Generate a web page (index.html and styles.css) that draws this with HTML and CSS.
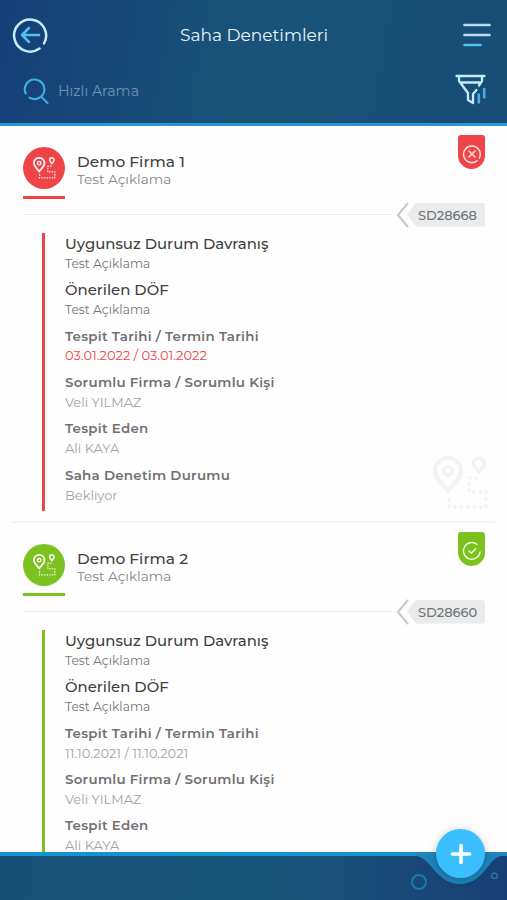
FILE: index.html
```html
<!DOCTYPE html>
<html lang="tr">
<head>
    <meta charset="UTF-8">
    <meta name="viewport" content="width=device-width, initial-scale=1.0">
    <title>Saha Denetimleri</title>
    <link rel="stylesheet" href="styles.css">
</head>
<body>
    <svg class="defs" width="0" height="0">
        <symbol id="route" viewBox="0 0 56 56">
            <g fill="none" stroke="currentColor">
                <path stroke-width="4.2" d="M15 35C10 28 2 23 2 15a13 13 0 0 1 26 0c0 8-8 13-13 20z"/>
                <circle cx="15" cy="15" r="4.2" stroke-width="3.4"/>
                <path stroke-width="3.600" d="M46 16c-3-4-5.500-5-5.500-8.500a5.500 5.500 0 0 1 11 0c0 3.500-2.500 4.500-5.500 8.500z"/>
                <path stroke-width="3" stroke-dasharray="3.500 3" d="M45 22h-9v14h17v15H16V41"/>
            </g>
        </symbol>
    </svg>

    <header>
        <div class="top-bar">
            <a href="#" class="back">
                <svg width="36" height="36" viewBox="0 0 36 36" fill="none" stroke-width="2.500" stroke-linecap="round" stroke-linejoin="round">
                    <path stroke="#c3ecff" d="M27.500 31.500A16 16 0 1 1 32 26.500"/>
                    <path stroke="#4fc0ef" d="M27 18H10M17 11l-7 7 7 7"/>
                </svg>
            </a>
            <h1>Saha Denetimleri</h1>
            <a href="#" class="menu">
                <svg width="28" height="24" viewBox="0 0 28 24" fill="none" stroke-width="2.700" stroke-linecap="round">
                    <path stroke="#b5dcf3" d="M1.500 2h25M1.500 12h25"/>
                    <path stroke="#4fc0ef" d="M1.500 22h16"/>
                </svg>
            </a>
        </div>
        <div class="search-bar">
            <svg width="26" height="26" viewBox="0 0 26 26" fill="none" stroke="#40aee3" stroke-width="2.100" stroke-linecap="round">
                <path d="M2.800 15.500A9.800 9.800 0 1 1 6.500 19.600M18 18.500L24.500 25"/>
            </svg>
            <span class="placeholder">Hızlı Arama</span>
            <svg class="filter" width="31" height="31" viewBox="0 0 31 31" fill="none" stroke="#c3ecff" stroke-width="2.300" stroke-linecap="round" stroke-linejoin="round">
                <path d="M1.500 2h28M4 2v5l9 12v7l5 3v-9l3.500-4M27 2v5l-3 4.500M5 8.500h21"/>
                <path stroke="#4aaee6" stroke-width="2.600" stroke-linecap="butt" d="M23.800 19.500v10M29.200 14v10.500"/>
            </svg>
        </div>
    </header>

    <main>
        <section class="card red">
            <div class="company">
                <div class="company-icon">
                    <span class="circle"><svg width="23" height="23"><use href="#route"/></svg></span>
                </div>
                <div class="company-text">
                    <h2>Demo Firma 1</h2>
                    <p>Test Açıklama</p>
                </div>
                <span class="badge">
                    <svg width="20" height="20" viewBox="0 0 20 20" fill="none" stroke="#ffe3e3" stroke-width="1.500" stroke-linecap="round">
                        <path d="M15 16.800A8.300 8.300 0 1 1 17.300 14M7 7l6 6M13 7l-6 6"/>
                    </svg>
                </span>
            </div>
            <div class="code-row">
                <svg width="14" height="26" viewBox="0 0 14 26" fill="none" stroke="#c8c9cb" stroke-width="2.200"><path d="M12 1L2 13l10 12"/></svg>
                <span class="code">SD28668</span>
            </div>
            <dl class="details">
                <div class="main"><dt>Uygunsuz Durum Davranış</dt><dd>Test Açıklama</dd></div>
                <div class="main"><dt>Önerilen DÖF</dt><dd>Test Açıklama</dd></div>
                <div><dt>Tespit Tarihi / Termin Tarihi</dt><dd class="late">03.01.2022 / 03.01.2022</dd></div>
                <div><dt>Sorumlu Firma / Sorumlu Kişi</dt><dd>Veli YILMAZ</dd></div>
                <div><dt>Tespit Eden</dt><dd>Ali KAYA</dd></div>
                <div><dt>Saha Denetim Durumu</dt><dd>Bekliyor</dd></div>
            </dl>
            <svg class="watermark" width="56" height="56"><use href="#route"/></svg>
        </section>

        <section class="card green">
            <div class="company">
                <div class="company-icon">
                    <span class="circle"><svg width="23" height="23"><use href="#route"/></svg></span>
                </div>
                <div class="company-text">
                    <h2>Demo Firma 2</h2>
                    <p>Test Açıklama</p>
                </div>
                <span class="badge">
                    <svg width="20" height="20" viewBox="0 0 20 20" fill="none" stroke="#ecffd5" stroke-width="1.500" stroke-linecap="round" stroke-linejoin="round">
                        <path d="M15 3.500A8.300 8.300 0 1 0 18 11M7 10l2.300 2.300L13.500 8"/>
                    </svg>
                </span>
            </div>
            <div class="code-row">
                <svg width="14" height="26" viewBox="0 0 14 26" fill="none" stroke="#c8c9cb" stroke-width="2.200"><path d="M12 1L2 13l10 12"/></svg>
                <span class="code">SD28660</span>
            </div>
            <dl class="details">
                <div class="main"><dt>Uygunsuz Durum Davranış</dt><dd>Test Açıklama</dd></div>
                <div class="main"><dt>Önerilen DÖF</dt><dd>Test Açıklama</dd></div>
                <div><dt>Tespit Tarihi / Termin Tarihi</dt><dd>11.10.2021 / 11.10.2021</dd></div>
                <div><dt>Sorumlu Firma / Sorumlu Kişi</dt><dd>Veli YILMAZ</dd></div>
                <div><dt>Tespit Eden</dt><dd>Ali KAYA</dd></div>
            </dl>
        </section>
    </main>

    <footer>
        <svg class="wave" width="147" height="48" viewBox="0 0 147 48" fill="none">
            <path fill="#1e86bd" d="M56 0h91v4h-6c-12 1-17 28-41 28S71 5 56 4z"/>
            <circle cx="59" cy="30" r="7" stroke="#1f78ae" stroke-width="2"/>
            <circle cx="134.500" cy="23.700" r="2.800" stroke="#1f78ae" stroke-width="1.500"/>
        </svg>
        <a href="#" class="add">
            <svg width="22" height="22" viewBox="0 0 22 22" stroke="white" stroke-width="3.600" stroke-linecap="round"><path d="M11 2.500v17M2.500 11h17"/></svg>
        </a>
    </footer>
</body>
</html>
```
FILE: styles.css
```css
* {
    box-sizing: border-box;
}
body {
    font-family: Montserrat, Inter, sans-serif;
    margin: 0;
    height: 900px;
    display: flex;
    flex-direction: column;
    overflow: hidden;
    background: #fefefe;
}
h1, h2, p, dl, dd {
    margin: 0;
}
a, svg {
    display: block;
}
.defs {
    position: absolute;
}
header {
    height: 126px;
    flex: none;
    border-bottom: 3px solid #2798d4;
    background: linear-gradient(100deg, #143f77 0%, #174b78 28%, #195478 50%, #195077 70%, #184e75 100%);
}
.top-bar {
    display: flex;
    align-items: center;
    justify-content: space-between;
    height: 70px;
    padding: 0 16px 0 12px;
}
.top-bar h1 {
    font-size: 17px;
    font-weight: 400;
    color: #e8f3fa;
    padding-right: 3px;
}
.search-bar {
    display: flex;
    align-items: center;
    height: 42px;
    padding: 0 21px 0 23px;
}
.placeholder {
    color: #6d92b5;
    font-size: 14.2px;
    margin-left: 9px;
}
.filter {
    margin-left: auto;
    margin-top: -3px;
}
main {
    flex: 1;
    min-height: 0;
    overflow: hidden;
}
.card {
    position: relative;
    height: 397px;
    margin: 0 12px;
    padding: 0 10px 0 11px;
    border-bottom: 2px solid #f4f4f5;
}
.red { color: #ef4549; }
.green { color: #7bc221; }
.company {
    display: flex;
    height: 76px;
}
.company-icon {
    width: 42px;
    height: 52px;
    margin-top: 21px;
    border-bottom: 3px solid currentColor;
}
.circle {
    display: flex;
    align-items: center;
    justify-content: center;
    width: 42px;
    height: 42px;
    border-radius: 50%;
    background: currentColor;
}
.circle svg {
    color: #fff3ef;
}
.company-text {
    padding: 26px 0 0 12px;
}
h2 {
    font-size: 15.4px;
    line-height: 19px;
    font-weight: 500;
    color: #404040;
}
.company-text p {
    font-size: 13.6px;
    line-height: 16px;
    color: #858585;
}
.badge {
    width: 27px;
    height: 34px;
    margin: 9px 0 0 auto;
    padding: 9px 0 0 3.5px;
    border-radius: 3px 3px 14px 14px;
    background: currentColor;
}
.code-row {
    display: flex;
    align-items: center;
    height: 25px;
}
.code-row::before {
    content: "";
    flex: 1;
    height: 1px;
    margin-right: 4px;
    background: #ededee;
}
.code {
    width: 78px;
    height: 24px;
    margin-left: -3px;
    padding-left: 11px;
    line-height: 24px;
    font-size: 13px;
    font-weight: 500;
    color: #727476;
    border-radius: 0 3px 3px 0;
    background: #e9ebec;
    clip-path: polygon(9px 0, 100% 0, 100% 100%, 9px 100%, 0 50%);
}
.details {
    margin: 6px 0 0 19px;
    padding-left: 20px;
    border-left: 3px solid currentColor;
}
.green .details {
    height: 278px;
}
.details div {
    height: 46.33px;
}
.details dt {
    font-size: 13.4px;
    line-height: 21px;
    font-weight: 600;
    letter-spacing: 0.27px;
    color: #707070;
}
.details dd {
    font-size: 13px;
    line-height: 18px;
    color: #a2a2a2;
}
.details .main dt {
    font-size: 14.9px;
    line-height: 22px;
    font-weight: 500;
    letter-spacing: 0;
    color: #404040;
}
.details .main dd {
    font-size: 12.3px;
    line-height: 17px;
    color: #757575;
}
.details .late {
    line-height: 17px;
    color: #ef4549;
}
.watermark {
    position: absolute;
    right: 6px;
    bottom: 9px;
    color: #f3f3f3;
}
footer {
    position: relative;
    height: 48px;
    flex: none;
    border-top: 4px solid #1693cf;
    background: linear-gradient(90deg, #184f76 0%, #19557a 50%, #194a78 80%, #173f74 100%);
}
.wave {
    position: absolute;
    right: 0;
    top: -4px;
}
.add {
    position: absolute;
    right: 22px;
    top: -27px;
    width: 49px;
    height: 49px;
    padding: 13.5px;
    border-radius: 50%;
    background: #3bbffc;
    box-shadow: 0 2px 8px rgba(0, 0, 0, 0.25);
}
```
